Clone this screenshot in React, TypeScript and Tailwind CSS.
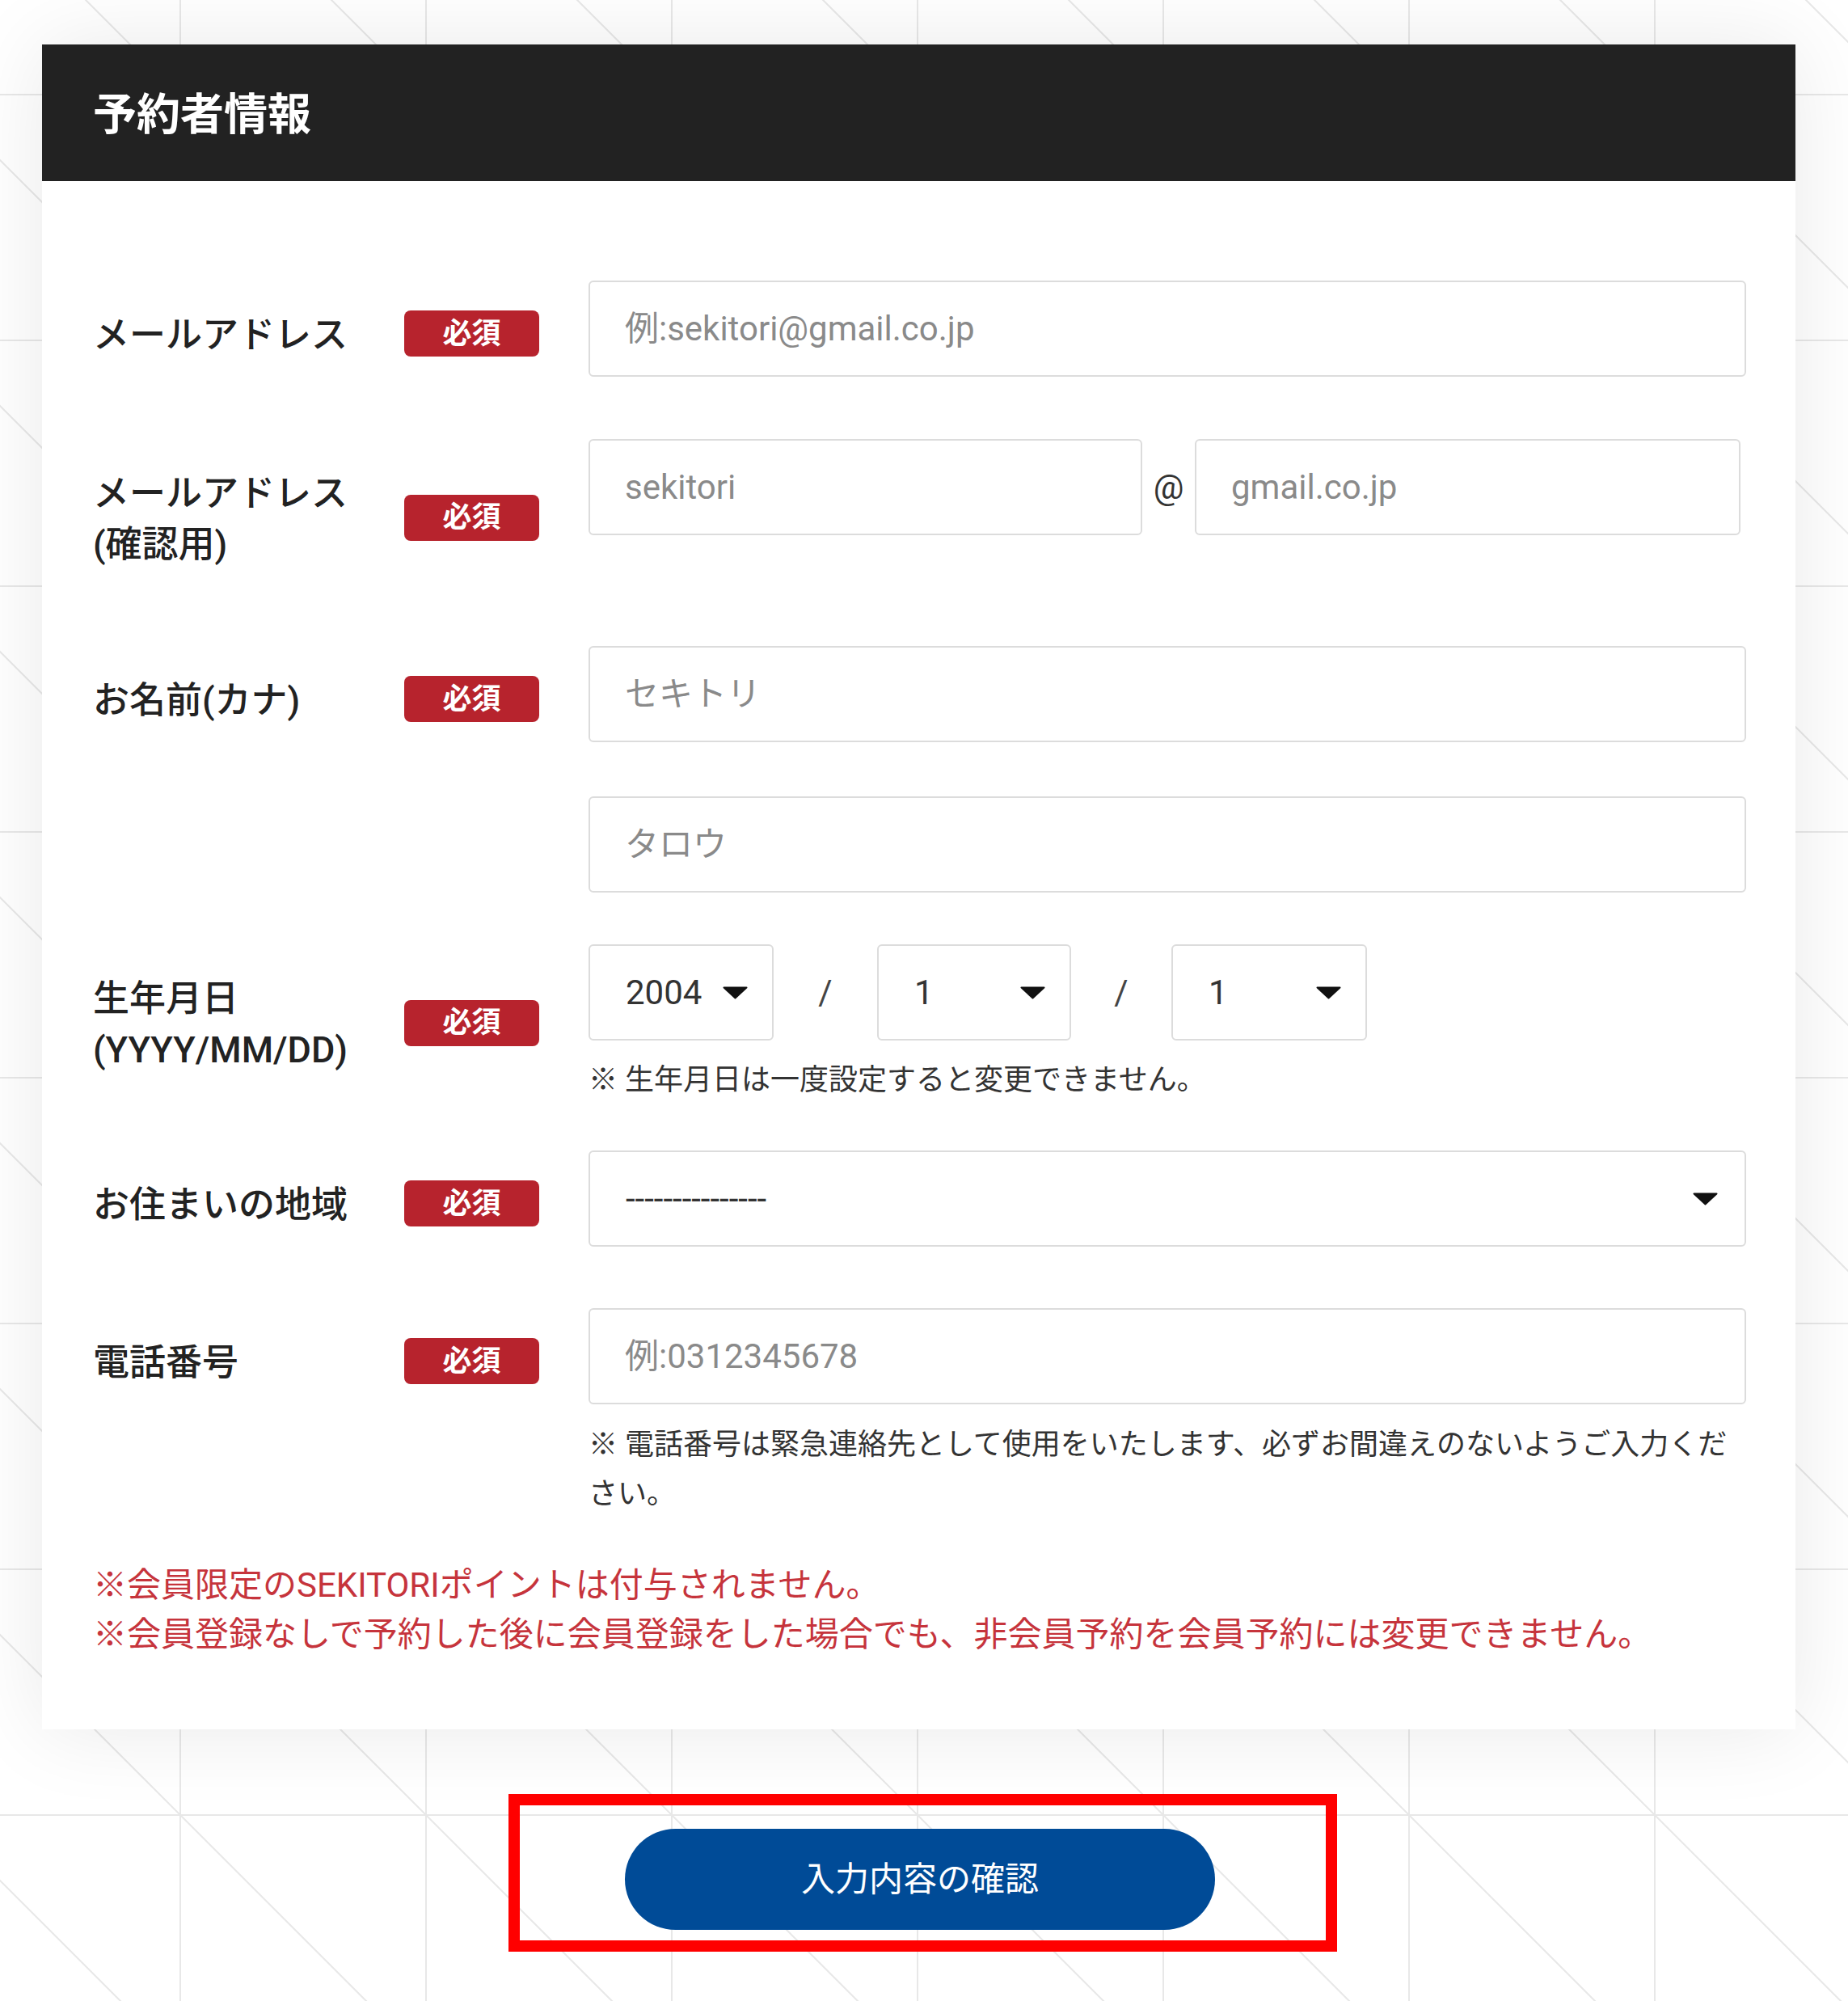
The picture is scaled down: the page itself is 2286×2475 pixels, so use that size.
import React from "react";

const Badge = () => (
  <div className="w-[167px] h-[57px] shrink-0 rounded-[8px] bg-[#b7232d] flex items-center justify-center text-white text-[36px] font-bold leading-none -mt-[4px]">
    必須
  </div>
);

type RowProps = { label: React.ReactNode; children: React.ReactNode; className?: string };

function Row({ label, children, className }: RowProps) {
  return (
    <div className={`flex items-start ${className ?? ""}`}>
      <div className="w-[613px] shrink-0 pt-[36px] flex items-center">
        <div className="w-[385px] shrink-0 text-[45px] leading-[63px] font-medium text-[#222]">{label}</div>
        <Badge />
      </div>
      <div className="flex-1 min-w-0">{children}</div>
    </div>
  );
}

const TextInput = ({ placeholder, className }: { placeholder: string; className?: string }) => (
  <input
    type="text"
    placeholder={placeholder}
    className={`block h-[119px] border-2 border-[#dcdcdc] rounded-[6px] px-[43px] text-[42px] text-[#333] placeholder:text-[#8a8a8a] outline-none bg-white ${className ?? "w-full"}`}
  />
);

const Triangle = () => (
  <svg width="31" height="16" viewBox="0 0 31 16" className="shrink-0">
    <path d="M1.5 1.5 H29.5 L15.5 14.5 Z" fill="#111" stroke="#111" strokeWidth="2" strokeLinejoin="round" />
  </svg>
);

const SelectBox = ({ value, className }: { value: string; className: string }) => (
  <div
    className={`h-[119px] shrink-0 border-2 border-[#dcdcdc] rounded-[6px] pl-[44px] pr-[30px] flex items-center justify-between text-[42px] text-[#333] bg-white ${className}`}
  >
    <span>{value}</span>
    <Triangle />
  </div>
);

export default function App() {
  return (
    <div className="relative min-h-[2475px] w-full overflow-hidden bg-white font-['Roboto','Noto_Sans_CJK_JP',sans-serif]">
      <svg className="absolute inset-0 w-full h-full" aria-hidden="true">
        <defs>
          <pattern id="bggrid" x="222" y="116" width="304" height="304" patternUnits="userSpaceOnUse">
            <path d="M1 0 V304 M0 1 H304 M1 1 L305 305" stroke="#e8e8e8" strokeWidth="2" fill="none" />
          </pattern>
        </defs>
        <rect width="100%" height="100%" fill="url(#bggrid)" />
      </svg>

      <div className="relative pt-[55px] pl-[52px]">
        {/* Card */}
        <div className="w-[2169px] bg-white shadow-[0_0_100px_rgba(0,0,0,0.09)]">
          <div className="h-[169px] bg-[#222] flex items-center pl-[63px] pt-[6px]">
            <h2 className="text-white text-[54px] font-bold leading-none">予約者情報</h2>
          </div>

          <div className="pl-[63px] pr-[61px] pt-[123px] pb-[87px]">
            <Row label="メールアドレス">
              <TextInput placeholder="例:sekitori@gmail.co.jp" />
            </Row>

            <Row
              className="mt-[77px]"
              label={
                <>
                  メールアドレス
                  <br />
                  (確認用)
                </>
              }
            >
              <div className="flex items-center">
                <TextInput placeholder="sekitori" className="w-[685px]" />
                <div className="w-[65px] text-center text-[42px] text-[#333]">@</div>
                <TextInput placeholder="gmail.co.jp" className="w-[675px]" />
              </div>
            </Row>

            <Row className="mt-[94px]" label="お名前(カナ)">
              <TextInput placeholder="セキトリ" />
              <TextInput placeholder="タロウ" className="w-full mt-[67px]" />
            </Row>

            <Row
              className="mt-[64px]"
              label={
                <>
                  生年月日
                  <br />
                  (YYYY/MM/DD)
                </>
              }
            >
              <div className="flex items-center">
                <SelectBox value="2004" className="w-[229px]" />
                <div className="w-[128px] text-center text-[42px] text-[#444]">/</div>
                <SelectBox value="1" className="w-[240px]" />
                <div className="w-[124px] text-center text-[42px] text-[#444]">/</div>
                <SelectBox value="1" className="w-[242px]" />
              </div>
              <p className="mt-[19px] text-[36px] leading-[60px] text-[#333]">※ 生年月日は一度設定すると変更できません。</p>
            </Row>

            <Row className="mt-[57px]" label="お住まいの地域">
              <SelectBox value="---------------" className="w-full pr-[33px]" />
            </Row>

            <Row className="mt-[76px]" label="電話番号">
              <TextInput placeholder="例:0312345678" />
              <p className="mt-[20px] text-[36px] leading-[61px] text-[#333]">
                ※ 電話番号は緊急連絡先として使用をいたします、必ずお間違えのないようご入力ください。
              </p>
            </Row>

            <div className="mt-[51px] text-[42px] leading-[61px] text-[#c6343c]">
              <p>※会員限定のSEKITORIポイントは付与されません。</p>
              <p>※会員登録なしで予約した後に会員登録をした場合でも、非会員予約を会員予約には変更できません。</p>
            </div>
          </div>
        </div>

        {/* Button area */}
        <div className="mt-[80px] ml-[577px] w-[1025px] border-[14px] border-[#ff0000] pt-[29px] pb-[13px] pl-[130px]">
          <button
            type="button"
            className="w-[730px] h-[125px] rounded-full bg-[#004b97] text-white text-[42px] font-normal flex items-center justify-center"
          >
            入力内容の確認
          </button>
        </div>
      </div>
    </div>
  );
}
